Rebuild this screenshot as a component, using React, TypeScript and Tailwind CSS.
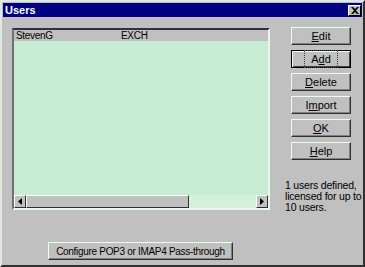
import React from "react";

const font = { fontFamily: '"Liberation Sans", Arial, sans-serif' };

function Btn({ label, u, def }: { label: string; u: number; def?: boolean }) {
  const a = label.slice(0, u);
  const b = label.slice(u, u + 1);
  const c = label.slice(u + 1);
  return (
    <div
      className={
        "w-[60px] h-[18px] flex items-center justify-center text-[11px] text-black bg-[#c0c0c0] " +
        (def
          ? "border border-black shadow-[inset_1px_1px_0_#f0fff0,inset_-1px_-1px_0_#404040]"
          : "border border-t-[#eaffea] border-l-[#eaffea] border-r-[#303030] border-b-[#303030] shadow-[inset_-1px_-1px_0_#808080]")
      }
    >
      <span className={def ? "px-[6px] outline outline-1 outline-dotted outline-[#404040]" : ""}>
        {a}
        <span className="underline">{b}</span>
        {c}
      </span>
    </div>
  );
}

export default function App() {
  return (
    <div
      className="w-[365px] h-[267px] bg-[#c0c0c0] border-2 border-t-[#e0e8e0] border-l-[#e0e8e0] border-r-[#303030] border-b-[#303030] p-px flex flex-col"
      style={font}
    >
      <div className="h-[14px] bg-[#000080] flex items-center justify-between pl-[2px] pr-[1px]">
        <span className="text-white font-bold text-[11px] leading-none">Users</span>
        <div className="w-[13px] h-[11px] bg-[#c0c0c0] border border-t-white border-l-white border-r-black border-b-black flex items-center justify-center">
          <svg width="8" height="7" viewBox="0 0 8 7">
            <path d="M0 0h2l2 2 2-2h2l-3 3.5L8 7H6L4 5 2 7H0l3-3.5z" fill="#000" />
          </svg>
        </div>
      </div>
      <div className="flex flex-1">
        <div className="flex flex-col pl-[9px] pt-[11px]">
          <div className="w-[258px] h-[182px] border-2 border-t-[#303040] border-l-[#707070] border-r-[#e8f8e8] border-b-[#e8f8e8] bg-[#c6ecd4] flex flex-col">
            <div className="h-[11px] bg-[#c0c0c0] flex items-center text-[10px] tracking-[-0.3px] leading-none text-black">
              <span className="pl-[2px] w-[107px]">StevenG</span>
              <span>EXCH</span>
            </div>
            <div className="flex-1" />
            <div className="h-[13px] flex bg-[#d4f0dc]">
              <div className="w-[12px] h-[13px] bg-[#c0c0c0] border border-t-white border-l-white border-r-[#303030] border-b-[#303030] flex items-center justify-center">
                <svg width="4" height="7" viewBox="0 0 4 7"><path d="M4 0v7L0 3.5z" fill="#000" /></svg>
              </div>
              <div className="w-[163px] h-[13px] bg-[#c0c0c0] border border-t-white border-l-white border-r-[#303030] border-b-[#303030]" />
              <div className="flex-1" />
              <div className="w-[12px] h-[13px] bg-[#c0c0c0] border border-t-white border-l-white border-r-[#303030] border-b-[#303030] flex items-center justify-center">
                <svg width="4" height="7" viewBox="0 0 4 7"><path d="M0 0v7L4 3.5z" fill="#000" /></svg>
              </div>
            </div>
          </div>
          <div className="ml-[36px] mt-[32px] w-[185px] h-[18px] flex items-center justify-center whitespace-nowrap text-[10px] tracking-[-0.3px] text-black border border-t-[#eaffea] border-l-[#eaffea] border-r-[#303030] border-b-[#303030] shadow-[inset_-1px_-1px_0_#808080]">
            Configure POP3 or IMAP4 Pass-through
          </div>
        </div>
        <div className="flex flex-col ml-[21px] pt-[10px]">
          <div className="flex flex-col gap-[5px]">
            <Btn label="Edit" u={0} />
            <Btn label="Add" u={1} def />
            <Btn label="Delete" u={0} />
            <Btn label="Import" u={1} />
            <Btn label="OK" u={0} />
            <Btn label="Help" u={0} />
          </div>
          <div className="mt-[20px] -ml-[6px] text-[10.5px] tracking-[-0.2px] leading-[11px] text-black whitespace-nowrap">
            1 users defined,
            <br />
            licensed for up to
            <br />
            10 users.
          </div>
        </div>
      </div>
    </div>
  );
}
